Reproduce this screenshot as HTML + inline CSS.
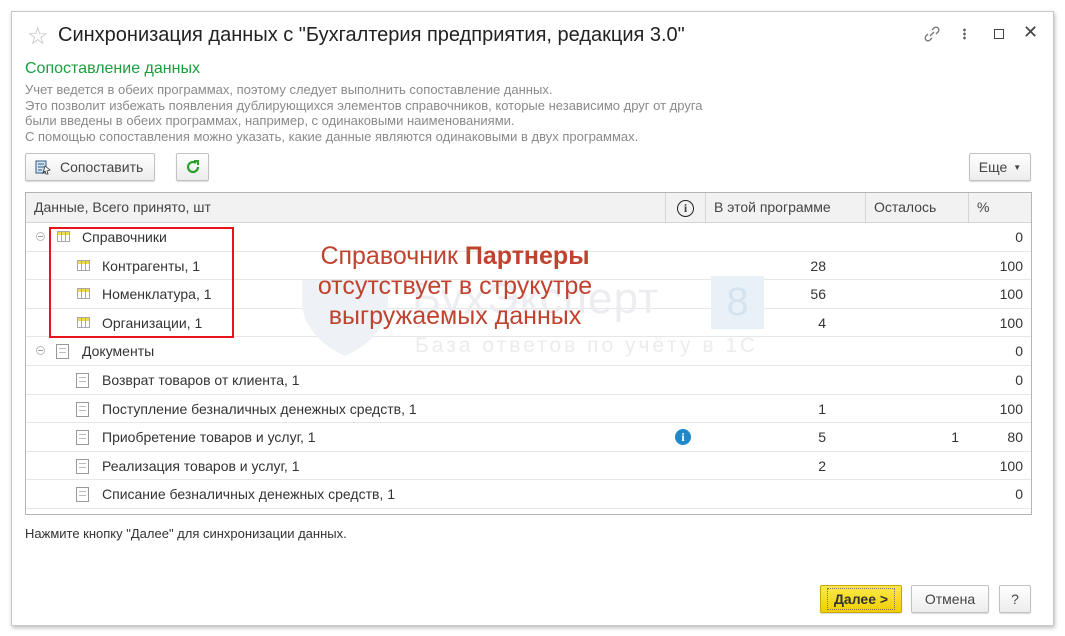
<!DOCTYPE html>
<html><head><meta charset="utf-8"><style>
*{box-sizing:border-box;margin:0;padding:0}
body{width:1065px;height:636px;background:#fff;font-family:"Liberation Sans",sans-serif;position:relative;overflow:hidden;color:#333}
.win{position:absolute;left:11px;top:11px;width:1043px;height:615px;border:1px solid #c8c8c8;box-shadow:1px 2px 4px rgba(0,0,0,.25);background:#fff}
.a{position:absolute;white-space:nowrap}
.btn{position:absolute;border:1px solid #c2c2c2;border-radius:2px;background:linear-gradient(#fff,#ececec);box-shadow:0 1px 1px rgba(0,0,0,.15);font-size:14px;color:#444;display:flex;align-items:center;justify-content:center}
.tbl{position:absolute;left:25px;top:192px;width:1007px;height:323px;border:1px solid #b5b5b5}
.hdr{position:absolute;left:0;top:0;width:100%;height:30px;background:#f2f2f2;border-bottom:1px solid #d5d5d5;font-size:14px;color:#444}
.hdr div{position:absolute;top:0;height:29px;line-height:29px;padding-left:8px;border-right:1px solid #d5d5d5}
.row{position:absolute;left:0;width:100%;height:28.6px;border-bottom:1px solid #e6e6e6;font-size:14px;color:#333;line-height:28px}
.row span{position:absolute}
.n{text-align:right}
.ti{position:absolute;top:8px;width:13px;height:11px;border:1px solid #a8a8a8;background:linear-gradient(#f6d84a 0 3px,#fff 3px)}
.ti:before{content:"";position:absolute;left:3px;top:0;width:3px;height:9px;border-left:1px solid #a8a8a8;border-right:1px solid #a8a8a8}
.di{position:absolute;top:7px;width:13px;height:15px;border:1px solid #999;background:repeating-linear-gradient(#fff 0 3px,#bbb 3px 4px);background-clip:content-box;padding:2px 2px}
.mi{position:absolute;top:9px;width:9px;height:9px;border:1px solid #bbb;border-radius:50%;}
.mi:after{content:"";position:absolute;left:1px;top:3px;width:5px;height:1px;background:#999}
</style></head><body>
<div class="win">
<div class="a" style="left:15px;top:10px;font-size:24px;color:#bbb">☆</div>
<div class="a" style="left:46px;top:12px;font-size:20px;color:#222">Синхронизация данных с "Бухгалтерия предприятия, редакция 3.0"</div>
<svg class="a" style="left:910px;top:12px" width="20" height="20" viewBox="0 0 20 20" fill="none" stroke="#777" stroke-width="1.3"><path d="M8 12l4-4M6 10l-2 2a2.5 2.5 0 0 0 4 4l2-2M14 10l2-2a2.5 2.5 0 0 0-4-4l-2 2"/></svg>
<div class="a" style="left:951px;top:16px;width:3px;height:12px;background:radial-gradient(circle,#666 1.3px,transparent 1.5px) 0 0/3px 4px"></div>
<div class="a" style="left:982px;top:17px;width:10px;height:10px;border:1.3px solid #444"></div>
<div class="a" style="left:1011px;top:10px;font-size:18px;color:#444">✕</div>
<div class="a" style="left:13px;top:48px;font-size:16px;color:#1a9e3e">Сопоставление данных</div>
<div class="a" style="left:13px;top:70px;font-size:13px;line-height:15.6px;color:#8a8a8a">Учет ведется в обеих программах, поэтому следует выполнить сопоставление данных.<br>Это позволит избежать появления дублирующихся элементов справочников, которые независимо друг от друга<br>были введены в обеих программах, например, с одинаковыми наименованиями.<br>С помощью сопоставления можно указать, какие данные являются одинаковыми в двух программах.</div>
</div>
<div class="btn" style="left:25px;top:153px;width:130px;height:28px;justify-content:flex-start;padding-left:8px"><svg width="18" height="18" viewBox="0 0 18 18"><rect x="2" y="3" width="10" height="12" fill="#d8e4f0" stroke="#2a5a8a"/><path d="M4 6h6M4 9h6M4 12h4" stroke="#2a5a8a"/><path d="M11 8l5 4-3 1 1 3-2 0-1-3-2 2z" fill="#fff" stroke="#333" stroke-width=".8"/></svg><span style="margin-left:8px">Сопоставить</span></div>
<div class="btn" style="left:176px;top:153px;width:33px;height:28px"><svg width="16" height="16" viewBox="0 0 16 16" fill="none" stroke="#2ca02c" stroke-width="2.2"><path d="M13 8a5 5 0 1 1-2-4"/><path d="M9 2h4v4" stroke-width="2"/></svg></div>
<div class="btn" style="left:969px;top:153px;width:62px;height:28px">Еще <span style="font-size:8px;margin-left:6px">▼</span></div>
<div class="tbl">
<div class="hdr">
<div style="left:0;width:640px">Данные, Всего принято, шт</div>
<div style="left:640px;width:40px;padding:0;text-align:center"><span style="display:inline-block;width:17px;height:17px;border:1.5px solid #222;border-radius:50%;line-height:14px;font-weight:bold;font-family:'Liberation Serif',serif;font-size:12px;margin-top:6px">i</span></div>
<div style="left:680px;width:160px">В этой программе</div>
<div style="left:840px;width:103px">Осталось</div>
<div style="left:943px;width:62px;border:0">%</div>
</div>
<div style="position:absolute;left:0;top:30px;width:100%">
<div class="row" style="top:0"><i class="mi" style="left:10px"></i><i class="ti" style="left:31px"></i><span style="left:56px">Справочники</span><span class="n" style="right:8px">0</span></div>
<div class="row" style="top:28.6px"><i class="ti" style="left:51px"></i><span style="left:76px">Контрагенты, 1</span><span class="n" style="right:205px">28</span><span class="n" style="right:8px">100</span></div>
<div class="row" style="top:57.2px"><i class="ti" style="left:51px"></i><span style="left:76px">Номенклатура, 1</span><span class="n" style="right:205px">56</span><span class="n" style="right:8px">100</span></div>
<div class="row" style="top:85.8px"><i class="ti" style="left:51px"></i><span style="left:76px">Организации, 1</span><span class="n" style="right:205px">4</span><span class="n" style="right:8px">100</span></div>
<div class="row" style="top:114.4px"><i class="mi" style="left:10px"></i><i class="di" style="left:30px"></i><span style="left:56px">Документы</span><span class="n" style="right:8px">0</span></div>
<div class="row" style="top:143px"><i class="di" style="left:50px"></i><span style="left:76px">Возврат товаров от клиента, 1</span><span class="n" style="right:8px">0</span></div>
<div class="row" style="top:171.6px"><i class="di" style="left:50px"></i><span style="left:76px">Поступление безналичных денежных средств, 1</span><span class="n" style="right:205px">1</span><span class="n" style="right:8px">100</span></div>
<div class="row" style="top:200.2px"><i class="di" style="left:50px"></i><span style="left:76px">Приобретение товаров и услуг, 1</span><span style="left:649px;top:6px;width:16px;height:16px;border-radius:50%;background:#1e88c8;color:#fff;font-size:12px;font-weight:bold;line-height:16px;text-align:center;font-family:'Liberation Serif',serif">i</span><span class="n" style="right:205px">5</span><span class="n" style="right:72px">1</span><span class="n" style="right:8px">80</span></div>
<div class="row" style="top:228.8px"><i class="di" style="left:50px"></i><span style="left:76px">Реализация товаров и услуг, 1</span><span class="n" style="right:205px">2</span><span class="n" style="right:8px">100</span></div>
<div class="row" style="top:257.4px"><i class="di" style="left:50px"></i><span style="left:76px">Списание безналичных денежных средств, 1</span><span class="n" style="right:8px">0</span></div>
</div>
</div>
<svg class="a" style="left:300px;top:276px" width="90" height="82" viewBox="0 0 90 82"><path d="M2 4h86v22c0 24-20 44-43 54C22 70 2 50 2 26z" fill="#eef1f5"/></svg>
<div class="a" style="left:412px;top:274px;font-size:44px;color:#ededf1;letter-spacing:1px">БухЭксперт</div>
<div class="a" style="left:711px;top:276px;width:53px;height:53px;background:#e8f1f8;color:#d5e3ee;font-size:40px;text-align:center;line-height:53px">8</div>
<div class="a" style="left:415px;top:334px;font-size:21px;color:#ececec;letter-spacing:3px">База ответов по учёту в 1С</div>
<div class="a" style="left:49px;top:227px;width:185px;height:111px;border:2px solid #e8141a"></div>
<div class="a" style="left:290px;top:241px;width:330px;text-align:center;font-size:25px;line-height:30px;color:#c0432f">Справочник <b>Партнеры</b><br>отсутствует в струкутре<br>выгружаемых данных</div>
<div class="a" style="left:25px;top:526px;font-size:13px;color:#333">Нажмите кнопку "Далее" для синхронизации данных.</div>
<div class="btn" style="left:820px;top:585px;width:82px;height:28px;background:linear-gradient(#fbe94a,#f0d000);border-color:#c8a800;font-weight:bold;color:#333"><span style="outline:1px dotted #776;padding:2px 6px">Далее &gt;</span></div>
<div class="btn" style="left:911px;top:585px;width:78px;height:28px">Отмена</div>
<div class="btn" style="left:999px;top:585px;width:32px;height:28px">?</div>
</body></html>
